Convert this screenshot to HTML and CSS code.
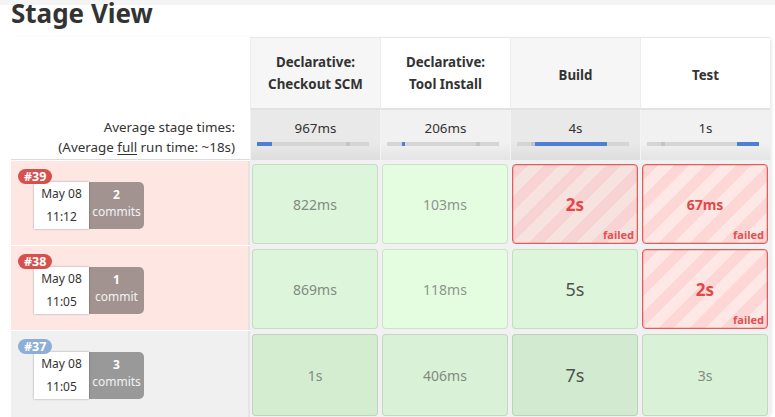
FILE: index.html
```html
<!DOCTYPE html>
<html>
<head>
<meta charset="utf-8">
<link rel="stylesheet" href="styles.css">
</head>
<body>
<h1 class="title">Stage View</h1>
<div class="sv">
  <div class="corner"></div>
  <div class="sh odd">Declarative:<br>Checkout SCM</div>
  <div class="sh even">Declarative:<br>Tool Install</div>
  <div class="sh odd single">Build</div>
  <div class="sh even single">Test</div>

  <div class="avg-label">Average stage times:<br>(Average <u>full</u> run time: ~18s)</div>
  <div class="avg odd"><div class="avg-val">967ms</div><div class="bar"><i class="tick" style="left:89px"></i><b style="margin-left:0;width:15px"></b></div></div>
  <div class="avg even"><div class="avg-val">206ms</div><div class="bar"><i class="tick" style="left:89px"></i><b style="margin-left:15px;width:3px"></b></div></div>
  <div class="avg odd"><div class="avg-val">4s</div><div class="bar"><i class="tick" style="left:14px"></i><b style="margin-left:18px;width:72px"></b></div></div>
  <div class="avg even"><div class="avg-val">1s</div><div class="bar"><i class="tick" style="left:14px"></i><b style="margin-left:90px;width:23px"></b></div></div>

  <div class="build failed">
    <span class="badge red">#39</span>
    <div class="info">
      <div class="date">May 08<br>11:12</div>
      <div class="commits"><strong>2</strong><span>commits</span></div>
    </div>
  </div>
  <div class="cell"><div class="box ok c-mid">822ms</div></div>
  <div class="cell"><div class="box ok light c-light">103ms</div></div>
  <div class="cell"><div class="box fail dim big">2s<span class="flag">failed</span></div></div>
  <div class="cell"><div class="box fail">67ms<span class="flag">failed</span></div></div>

  <div class="build failed">
    <span class="badge red">#38</span>
    <div class="info">
      <div class="date">May 08<br>11:05</div>
      <div class="commits"><strong>1</strong><span>commit</span></div>
    </div>
  </div>
  <div class="cell"><div class="box ok c-mid">869ms</div></div>
  <div class="cell"><div class="box ok light c-light">118ms</div></div>
  <div class="cell"><div class="box ok c-dark">5s</div></div>
  <div class="cell"><div class="box fail big">2s<span class="flag">failed</span></div></div>

  <div class="build aborted">
    <span class="badge blue">#37</span>
    <div class="info">
      <div class="date">May 08<br>11:05</div>
      <div class="commits"><strong>3</strong><span>commits</span></div>
    </div>
  </div>
  <div class="cell"><div class="box ok g1 c-mid">1s</div></div>
  <div class="cell"><div class="box ok g2 c-mid">406ms</div></div>
  <div class="cell"><div class="box ok g3 c-dark">7s</div></div>
  <div class="cell"><div class="box ok g4 c-mid">3s</div></div>
</div>
</body>
</html>
```

FILE: styles.css
```css
html, body {
  margin: 0;
  padding: 0;
}
body {
  width: 775px;
  height: 417px;
  overflow: hidden;
  background: linear-gradient(#f4f4f4 0 5px, #ffffff 5px);
  font-family: "Noto Sans", "DejaVu Sans", sans-serif;
  color: #333;
}
.title {
  margin: 0 0 11px 11px;
  font-size: 26px;
  line-height: 26px;
  font-weight: bold;
  color: #333;
}
.sv {
  display: grid;
  grid-template-columns: 239px repeat(4, 130px);
  grid-template-rows: 73px 50px 85px 85px 87px;
  margin-left: 11px;
  width: 759px;
  box-shadow: 3px 0 4px -2px rgba(0,0,0,0.12);
}
.corner {
  background: #fff;
}
.sh {
  display: flex;
  align-items: center;
  justify-content: center;
  text-align: center;
  font-weight: bold;
  font-size: 13.3px;
  line-height: 22px;
  color: #333;
  border-top: 1px solid #e8e8e8;
  border-bottom: 2px solid #e2e2e2;
}
.sh.single { padding-top: 3px; }
.sh.odd { background: #f6f6f6; border-left: 1px solid #ececec; }
.sh.even { background: #fff; border-left: 1px solid #ececec; }
.avg-label {
  text-align: right;
  font-size: 13.4px;
  line-height: 20px;
  padding: 7px 15px 0 0;
  background: #fff;
  color: #333;
  border-bottom: 1px solid #dcdcdc;
}
.avg-label u { text-decoration-thickness: 1px; text-underline-offset: 2px; }
.avg {
  padding-top: 9px;
  border-left: 1px solid #f4f4f4;
}
.avg.odd { background: linear-gradient(#e9e9e9 65%, #dedede); }
.avg.even { background: linear-gradient(#f1f1f1 65%, #e4e4e4); }
.avg-val {
  text-align: center;
  font-size: 13.4px;
  line-height: 18px;
  color: #333;
}
.bar {
  position: relative;
  display: flex;
  height: 4px;
  margin: 5px 11px 0 6px;
  background: #d5d5d5;
}
.bar b {
  display: block;
  height: 4px;
  background: #4d7fd3;
  position: relative;
}
.bar .tick {
  position: absolute;
  top: 0;
  width: 4px;
  height: 4px;
  background: #c4c4c4;
}
.build {
  margin-top: 1px;
  padding: 8px 0 0 7px;
  border-right: 2px solid #e4e4e4;
  display: flex;
  flex-direction: column;
  align-items: flex-start;
}
.build.failed { background: #fee7e3; }
.build.aborted { background: #f0f0f0; }
.badge {
  position: relative;
  z-index: 1;
  display: block;
  height: 15px;
  line-height: 15px;
  padding: 0 6px;
  border-radius: 8px;
  font-size: 12.5px;
  font-weight: bold;
  color: #fff;
}
.badge.red { background: #d6504d; }
.badge.blue { background: #8daed6; }
.info {
  display: flex;
  margin: -2px 0 0 16px;
}
.date {
  width: 55px;
  height: 47px;
  box-sizing: border-box;
  background: #fff;
  box-shadow: 0 0 2px rgba(0,0,0,0.35);
  text-align: center;
  font-size: 12px;
  line-height: 23px;
  color: #333;
}
.commits {
  width: 55px;
  height: 47px;
  box-sizing: border-box;
  padding-top: 5px;
  display: flex;
  flex-direction: column;
  align-items: center;
  background: rgba(0,0,0,0.36);
  border-radius: 0 5px 5px 0;
  color: #fff;
  font-size: 12px;
}
.commits strong { line-height: 16px; }
.commits span { line-height: 18px; color: #f2f2f2; }
.cell {
  background: #f1f1f1;
  padding: 4px 2px 1px;
}
.box {
  position: relative;
  height: 100%;
  box-sizing: border-box;
  border-radius: 4px;
  border: 1px solid rgba(0,0,0,0.1);
  display: flex;
  align-items: center;
  justify-content: center;
  font-size: 14px;
}
.box.ok { background: #ddf5da; }
.box.light { background: #e4fde1; }
.box.g1 { background: #d4edd1; }
.box.g2 { background: #d9f1d6; }
.box.g3 { background: #d2eacf; }
.box.g4 { background: #d9f1d6; }
.c-mid { color: #838a82; }
.c-light { color: #8e958d; }
.c-dark { color: #4d514c; font-size: 18px; }
.box.fail {
  border: 1px solid #e25a5a;
  box-shadow: inset 0 0 0 1px rgba(226,90,90,0.25);
  background: repeating-linear-gradient(135deg, #fdd6d6 0 11px, #fee8e5 11px 22px);
  color: #e04848;
  font-weight: bold;
}
.box.fail.dim {
  background: repeating-linear-gradient(135deg, #f8d3d3 0 11px, #f6e2de 11px 22px);
}
.box.big { font-size: 17px; }
.flag {
  position: absolute;
  right: 3px;
  bottom: 1px;
  font-size: 11px;
  line-height: 14px;
  font-weight: bold;
  color: #e05252;
}
```
